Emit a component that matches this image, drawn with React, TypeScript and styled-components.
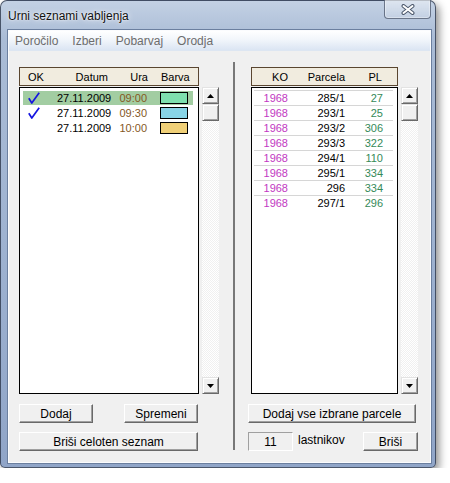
import React from "react"
import styled, { createGlobalStyle } from "styled-components"

const GlobalStyle = createGlobalStyle`
  html, body {
    margin: 0;
    padding: 0;
    background: #fff;
  }
  body {
    font-family: "Liberation Sans", Arial, sans-serif;
  }
`

const Window = styled.div`
  box-sizing: border-box;
  width: 436px;
  height: 468px;
  display: flex;
  flex-direction: column;
  padding: 0 4px 4px 7px;
  border: 1px solid rgba(45, 55, 75, 0.8);
  border-radius: 7px 7px 5px 5px;
  background: linear-gradient(
    180deg,
    #c3d1e4 0%,
    #aabcd6 8%,
    #9fb3d1 50%,
    #90a5c8 100%
  );
  box-shadow: 3px 4px 9px rgba(0, 0, 0, 0.45);
`

const TitleBar = styled.div`
  height: 29px;
  display: flex;
  align-items: flex-start;
  justify-content: space-between;
`

const Title = styled.div`
  align-self: center;
  font-size: 12px;
  color: #111;
  text-shadow: 0 0 6px rgba(255, 255, 255, 0.95), 0 0 2px #fff;
  padding-top: 1px;
`

const CloseButton = styled.div`
  box-sizing: border-box;
  width: 47px;
  height: 19px;
  margin-top: -1px;
  display: flex;
  align-items: center;
  justify-content: center;
  border: 1px solid rgba(60, 72, 95, 0.7);
  border-top: none;
  border-radius: 0 0 4px 4px;
  background: linear-gradient(
    180deg,
    rgba(255, 255, 255, 0.45),
    rgba(255, 255, 255, 0.15)
  );
  box-shadow: inset 0 0 0 1px rgba(255, 255, 255, 0.35);
`

const Client = styled.div`
  box-sizing: border-box;
  flex: 1;
  display: flex;
  flex-direction: column;
  border: 1px solid #fbfcfe;
  box-shadow: 0 0 0 1px #6b7f9f;
  background: #f0f0f0;
`

const MenuBar = styled.div`
  height: 19px;
  display: flex;
  align-items: center;
  gap: 14px;
  padding-left: 6px;
  background: linear-gradient(180deg, #ffffff 0%, #f2f6fb 45%, #dbe5f3 100%);
  border-bottom: 1px solid #dde6f2;
`

const MenuItem = styled.span`
  font-size: 12px;
  color: #6d6d6d;
`

const Content = styled.div`
  flex: 1;
  display: flex;
  padding: 16px 12px 11px 10px;
`

const Panel = styled.div<{ width: number }>`
  width: ${(p) => p.width}px;
  display: flex;
  flex-direction: column;
`

const Separator = styled.div`
  width: 2px;
  margin: -5px 13px 1px 14px;
  background: #787878;
`

const Header = styled.div<{ columns: string; indent: number; width: number; offset?: number }>`
  box-sizing: border-box;
  width: ${(p) => p.width}px;
  height: 19px;
  margin-left: ${(p) => p.offset || 0}px;
  display: grid;
  grid-template-columns: ${(p) => p.columns};
  align-items: center;
  padding-left: ${(p) => p.indent}px;
  border: 1px solid #5a4630;
  background: #f1ecdf;
  font-size: 11px;
  color: #000;
`

const HeaderCell = styled.span<{ align?: "left" | "right"; pad?: number }>`
  text-align: ${(p) => p.align || "right"};
  padding-left: ${(p) => p.pad || 0}px;
`

const ListArea = styled.div<{ offset?: number }>`
  height: 307px;
  margin-top: 1px;
  margin-left: ${(p) => p.offset || 0}px;
  display: flex;
  gap: 3px;
`

const ListBox = styled.div<{ padLeft: number; padRight: number }>`
  box-sizing: border-box;
  flex: 1;
  border: 1px solid #000;
  background: #fff;
  padding: 2px ${(p) => p.padRight}px 0 ${(p) => p.padLeft}px;
`

const Row = styled.div<{ columns: string; indent?: number; selected?: boolean; lined?: boolean }>`
  height: 15px;
  box-sizing: border-box;
  display: grid;
  grid-template-columns: ${(p) => p.columns};
  align-items: center;
  padding-left: ${(p) => p.indent || 0}px;
  border-top: 1px solid ${(p) => (p.lined ? "#d6d6d6" : "transparent")};
  background: ${(p) => (p.selected ? "#a2cda2" : "transparent")};
  background-clip: padding-box;
  font-size: 11px;
  line-height: 14px;
`

const Cell = styled.span<{ color?: string }>`
  text-align: right;
  color: ${(p) => p.color || "#000"};
  white-space: nowrap;
`

const CheckCell = styled.span`
  display: flex;
  align-items: center;
  padding-left: 1px;
  height: 14px;
`

const SwatchCell = styled.span`
  display: flex;
  align-items: center;
  padding-left: 13px;
`

const Swatch = styled.span<{ color: string }>`
  box-sizing: border-box;
  width: 28px;
  height: 12px;
  border: 1px solid #000;
  background: ${(p) => p.color};
`

const ScrollBar = styled.div`
  width: 17px;
  display: flex;
  flex-direction: column;
`

const Raised = styled.div`
  box-sizing: border-box;
  width: 17px;
  height: 17px;
  display: flex;
  align-items: center;
  justify-content: center;
  background: #f0f0f0;
  border-top: 1px solid #e3e3e3;
  border-left: 1px solid #e3e3e3;
  border-right: 1px solid #696969;
  border-bottom: 1px solid #696969;
  box-shadow: inset 1px 1px 0 #fff, inset -1px -1px 0 #a0a0a0;
`

const Track = styled.div`
  flex: 1;
  background-color: #fff;
  background-image: repeating-conic-gradient(#f0f0f0 0 25%, #fff 0 50%);
  background-size: 2px 2px;
`

const ButtonRow = styled.div<{ top: number; width?: number }>`
  width: ${(p) => (p.width ? `${p.width}px` : "auto")};
  height: 19px;
  margin-top: ${(p) => p.top}px;
  display: flex;
  align-items: center;
  justify-content: space-between;
`

const Button = styled.div<{ width: number }>`
  box-sizing: border-box;
  width: ${(p) => p.width}px;
  height: 19px;
  display: flex;
  align-items: center;
  justify-content: center;
  font-size: 12px;
  color: #000;
  background: #f0f0f0;
  border-top: 1px solid #fff;
  border-left: 1px solid #fff;
  border-right: 1px solid #696969;
  border-bottom: 1px solid #696969;
  box-shadow: inset -1px -1px 0 #a0a0a0;
`

const CountBox = styled.div`
  box-sizing: border-box;
  width: 45px;
  height: 19px;
  display: flex;
  align-items: center;
  justify-content: center;
  font-size: 12px;
  border-top: 1px solid #a0a0a0;
  border-left: 1px solid #a0a0a0;
  border-right: 1px solid #fff;
  border-bottom: 1px solid #fff;
`

const Label = styled.span`
  font-size: 12px;
  margin-left: 5px;
  margin-top: -3px;
  flex: 1;
`

const Arrow: React.FC<{ down?: boolean }> = ({ down }) => (
  <svg width="7" height="4" viewBox="0 0 7 4">
    <polygon
      points={down ? "0,0 7,0 3.5,4" : "3.5,0 7,4 0,4"}
      fill="#000"
    />
  </svg>
)

const Check = () => (
  <svg width="12" height="12" viewBox="0 0 12 12">
    <path
      d="M0.8 6.2 L3.8 11 L11.2 0.8"
      fill="none"
      stroke="#1515e0"
      strokeWidth="1.7"
      strokeLinejoin="round"
    />
  </svg>
)

const CloseGlyph = () => (
  <svg width="14" height="11" viewBox="0 0 14 11">
    <path d="M2.5 2 L11.5 9 M11.5 2 L2.5 9" stroke="#4c586c" strokeWidth="4" strokeLinecap="round" />
    <path d="M2.5 2 L11.5 9 M11.5 2 L2.5 9" stroke="#fff" strokeWidth="2" strokeLinecap="round" />
  </svg>
)

const Scroll = () => (
  <ScrollBar>
    <Raised>
      <Arrow />
    </Raised>
    <Raised />
    <Track />
    <Raised>
      <Arrow down />
    </Raised>
  </ScrollBar>
)

const dates = [
  { ok: true, date: "27.11.2009", time: "09:00", color: "#7ee0ae" },
  { ok: true, date: "27.11.2009", time: "09:30", color: "#88d4e6" },
  { ok: false, date: "27.11.2009", time: "10:00", color: "#f0d078" }
]

const parcels = [
  ["1968", "285/1", "27"],
  ["1968", "293/1", "25"],
  ["1968", "293/2", "306"],
  ["1968", "293/3", "322"],
  ["1968", "294/1", "110"],
  ["1968", "295/1", "334"],
  ["1968", "296", "334"],
  ["1968", "297/1", "296"]
]

const leftCols = "30px 50px 40px 1fr"
const rightHeadCols = "36px 57px 37px"
const rightRowCols = "34px 57px 38px"

export default function App() {
  return (
    <>
      <GlobalStyle />
      <Window>
        <TitleBar>
          <Title>Urni seznami vabljenja</Title>
          <CloseButton>
            <CloseGlyph />
          </CloseButton>
        </TitleBar>
        <Client>
          <MenuBar>
            <MenuItem>Poročilo</MenuItem>
            <MenuItem>Izberi</MenuItem>
            <MenuItem>Pobarvaj</MenuItem>
            <MenuItem>Orodja</MenuItem>
          </MenuBar>
          <Content>
            <Panel width={200}>
              <Header columns={leftCols} indent={8} width={180}>
                <HeaderCell align="left">OK</HeaderCell>
                <HeaderCell>Datum</HeaderCell>
                <HeaderCell>Ura</HeaderCell>
                <HeaderCell align="left" pad={13}>
                  Barva
                </HeaderCell>
              </Header>
              <ListArea>
                <ListBox padLeft={3} padRight={5}>
                  {dates.map((d, i) => (
                    <Row
                      key={d.time}
                      columns={leftCols}
                      indent={4}
                      selected={i === 0}
                    >
                      <CheckCell>{d.ok && <Check />}</CheckCell>
                      <Cell>{d.date}</Cell>
                      <Cell color="#85581f">{d.time}</Cell>
                      <SwatchCell>
                        <Swatch color={d.color} />
                      </SwatchCell>
                    </Row>
                  ))}
                </ListBox>
                <Scroll />
              </ListArea>
              <ButtonRow top={10} width={179}>
                <Button width={74}>Dodaj</Button>
                <Button width={74}>Spremeni</Button>
              </ButtonRow>
              <ButtonRow top={9} width={179}>
                <Button width={179}>Briši celoten seznam</Button>
              </ButtonRow>
            </Panel>
            <Separator />
            <Panel width={170}>
              <Header columns={rightHeadCols} indent={0} width={147} offset={3}>
                <HeaderCell>KO</HeaderCell>
                <HeaderCell>Parcela</HeaderCell>
                <HeaderCell>PL</HeaderCell>
              </Header>
              <ListArea offset={3}>
                <ListBox padLeft={2} padRight={4}>
                  {parcels.map(([ko, parcel, pl]) => (
                    <Row key={parcel} columns={rightRowCols} lined>
                      <Cell color="#c238c2">{ko}</Cell>
                      <Cell>{parcel}</Cell>
                      <Cell color="#358a58">{pl}</Cell>
                    </Row>
                  ))}
                </ListBox>
                <Scroll />
              </ListArea>
              <ButtonRow top={10}>
                <Button width={168}>Dodaj vse izbrane parcele</Button>
              </ButtonRow>
              <ButtonRow top={9}>
                <CountBox>11</CountBox>
                <Label>lastnikov</Label>
                <Button width={55}>Briši</Button>
              </ButtonRow>
            </Panel>
          </Content>
        </Client>
      </Window>
    </>
  )
}
